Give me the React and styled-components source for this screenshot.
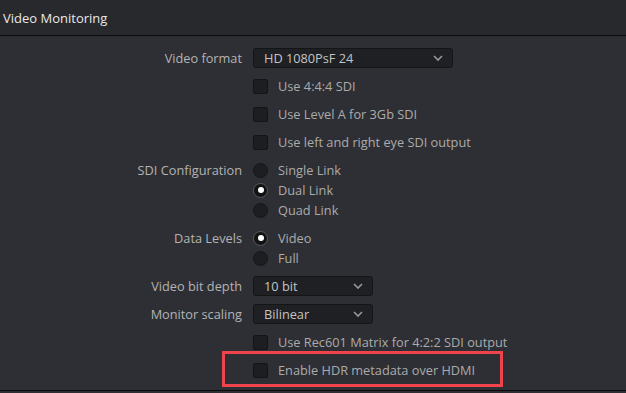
import React from 'react';
import styled, { createGlobalStyle } from 'styled-components';

const GlobalStyle = createGlobalStyle`
  html, body {
    margin: 0;
    padding: 0;
    background: #2e2f34;
  }
  body {
    font-family: 'Open Sans', 'Noto Sans', sans-serif;
    font-size: 12.75px;
  }
`;

const Panel = styled.div`
  width: 626px;
  height: 393px;
  background: #2e2f34;
  overflow: hidden;
  display: flex;
  flex-direction: column;
`;

const Header = styled.div`
  height: 35px;
  flex: 0 0 35px;
  background: #28292d;
  border-bottom: 1px solid #0b0b0c;
  color: #e8e8e8;
  display: flex;
  align-items: center;
  padding-left: 3px;
  font-size: 13px;
`;

const Body = styled.div`
  height: 355px;
  flex: 0 0 355px;
  padding-top: 8px;
  box-sizing: border-box;
  border-bottom: 1px solid #0b0b0c;
`;

const Row = styled.div`
  position: relative;
  display: grid;
  grid-template-columns: 242px 1fr;
  column-gap: 11px;
  align-items: start;
  padding: ${({ $group }) => ($group ? '4px 0' : '0')};
  min-height: 28px;
  box-sizing: border-box;
`;

const Label = styled.div`
  text-align: right;
  color: #b3b3b3;
  line-height: ${({ $group }) => ($group ? '20px' : '28px')};
  white-space: nowrap;
`;

const Controls = styled.div`
  display: flex;
  flex-direction: column;
`;

const Option = styled.label`
  display: flex;
  align-items: center;
  gap: 10px;
  height: ${({ $h }) => $h}px;
  color: #ababab;
  white-space: nowrap;
`;

const Box = styled.span`
  width: 15px;
  height: 15px;
  box-sizing: border-box;
  border-radius: 2px;
  background: #1d1e21;
  border: 1px solid #131416;
  flex: 0 0 15px;
`;

const Radio = styled.span`
  width: 15px;
  height: 15px;
  box-sizing: border-box;
  border-radius: 50%;
  background: ${({ $on }) => ($on ? '#111214' : '#1d1e21')};
  border: 1px solid ${({ $on }) => ($on ? '#5a5b5e' : '#141517')};
  flex: 0 0 15px;
  display: flex;
  align-items: center;
  justify-content: center;
  &::after {
    content: '';
    display: ${({ $on }) => ($on ? 'block' : 'none')};
    width: 6px;
    height: 6px;
    border-radius: 50%;
    background: #ffffff;
  }
`;

const SelectWrap = styled.div`
  height: 28px;
  display: flex;
  align-items: center;
`;

const Select = styled.div`
  width: ${({ $w }) => $w}px;
  height: 20px;
  box-sizing: border-box;
  background: #1f2023;
  border: 1px solid #141517;
  border-radius: 3px;
  display: flex;
  align-items: center;
  justify-content: space-between;
  padding: 0 9px 0 10px;
  color: #c4c4c4;
`;

const Highlight = styled.div`
  position: absolute;
  left: 222px;
  top: -5px;
  width: 281px;
  height: 36px;
  box-sizing: border-box;
  border: 3px solid #f0444a;
  pointer-events: none;
`;

const Chevron = () => (
  <svg width="10" height="6" viewBox="0 0 10 6">
    <path d="M1 1 L5 5 L9 1" fill="none" stroke="#9a9a9a" strokeWidth="1.6" />
  </svg>
);

const SelectRow = ({ label, value, width }) => (
  <Row>
    <Label>{label}</Label>
    <SelectWrap>
      <Select $w={width}>
        <span>{value}</span>
        <Chevron />
      </Select>
    </SelectWrap>
  </Row>
);

const CheckRow = ({ text, children }) => (
  <Row>
    <Label />
    <Option $h={28}>
      <Box />
      {text}
    </Option>
    {children}
  </Row>
);

const RadioRow = ({ label, options, selected }) => (
  <Row $group>
    <Label $group>{label}</Label>
    <Controls>
      {options.map((o) => (
        <Option key={o} $h={20}>
          <Radio $on={o === selected} />
          {o}
        </Option>
      ))}
    </Controls>
  </Row>
);

export default function App() {
  return (
    <>
      <GlobalStyle />
      <Panel>
        <Header>Video Monitoring</Header>
        <Body>
          <SelectRow label="Video format" value="HD 1080PsF 24" width={200} />
          <CheckRow text="Use 4:4:4 SDI" />
          <CheckRow text="Use Level A for 3Gb SDI" />
          <CheckRow text="Use left and right eye SDI output" />
          <RadioRow
            label="SDI Configuration"
            options={['Single Link', 'Dual Link', 'Quad Link']}
            selected="Dual Link"
          />
          <RadioRow label="Data Levels" options={['Video', 'Full']} selected="Video" />
          <SelectRow label="Video bit depth" value="10 bit" width={120} />
          <SelectRow label="Monitor scaling" value="Bilinear" width={120} />
          <CheckRow text="Use Rec601 Matrix for 4:2:2 SDI output" />
          <CheckRow text="Enable HDR metadata over HDMI">
            <Highlight />
          </CheckRow>
        </Body>
      </Panel>
    </>
  );
}
